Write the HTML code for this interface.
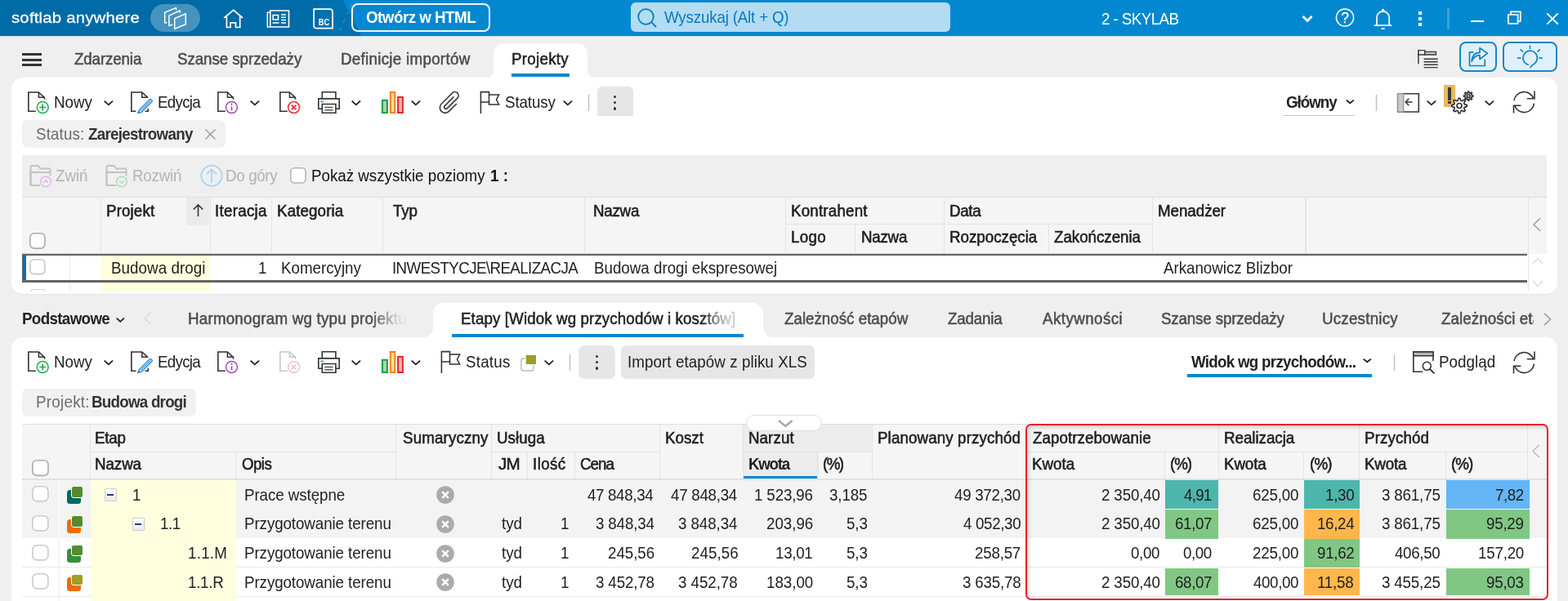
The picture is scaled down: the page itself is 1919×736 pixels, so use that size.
<!DOCTYPE html>
<html lang="pl"><head><meta charset="utf-8"><title>softlab anywhere - Projekty</title><style>
html,body{margin:0;padding:0;}
body{width:1919px;height:736px;overflow:hidden;position:relative;background:#efefef;font-family:"Liberation Sans",sans-serif;}
#r{position:absolute;left:0;top:0;width:1919px;height:736px;overflow:hidden;will-change:transform;}
#r>div,#r>svg,#r>span{position:absolute;box-sizing:border-box;}
.t{white-space:nowrap;line-height:24px;height:24px;transform:scaleY(1.035);}
</style></head><body><div id="r">
<div style="left:0px;top:0px;width:1919px;height:44px;background:#006ba6;"></div>
<div style="left:391px;top:0px;width:60px;height:44px;background:#0072af;"></div>
<div style="left:415px;top:0px;width:1504px;height:44px;background:#0288d1;clip-path:polygon(4.700px 0,100% 0,100% 100%,27.700px 100%);"></div>
<svg style="left:405px;top:0px;" width="40" height="44" viewBox="0 0 40 44" fill="none"><path d="M25 5L8 44" stroke="rgba(255,255,255,0.22)" stroke-width="1.300" stroke-dasharray="3.500 7"/></svg>
<span class="t" style="left:14px;top:10.00px;font-size:18px;font-weight:400;color:#fff;letter-spacing:0.177px;transform-origin:0 18.00px;-webkit-text-stroke:0.25px #fff;transform:scale(1.13,1.035);">softlab anywhere</span>
<div style="left:184px;top:5px;width:61px;height:34px;background:rgba(255,255,255,0.27);border-radius:17px;"></div>
<svg style="left:195px;top:5px;" width="40" height="34" viewBox="0 0 40 34" fill="none"><g stroke="#fff" stroke-width="1.5" stroke-linejoin="round" stroke-linecap="round"><path d="M20.600 6.800L20.300 4.600 6.700 10.300V23.100L8.900 22.800"/><path d="M25.500 10.300L25.200 8 11.900 14.100V26.600L15.700 25.300"/><path d="M18.700 17.650L32.300 11.700V24.700L18.700 30.400z" fill="rgba(255,255,255,0.08)"/></g></svg>
<svg style="left:272px;top:9px;" width="28" height="28" viewBox="0 0 28 28" fill="none"><path d="M2.100 13L13.750 3.400 25 13" stroke="#fff" stroke-width="1.700" stroke-linejoin="miter" stroke-linecap="butt"/><path d="M5.400 11V24.500H10V18.800H16.500V24.500H21.700V11" stroke="#fff" stroke-width="1.700" stroke-linejoin="miter"/></svg>
<svg style="left:325px;top:10px;" width="30" height="25" viewBox="0 0 30 25" fill="none"><g stroke="#fff"><path d="M5.750 3H28.500V23H5.750z" stroke-width="1.600"/><path d="M5.750 5.200H2.300V23H5.750" stroke-width="1.500"/><path d="M9.200 8.500h6.300v5.500H9.200z" stroke-width="1.600"/><path d="M19 8h6M19 11.300h6M19 14.500h6M8.500 18h8M19 18h6" stroke-width="1.500"/></g></svg>
<svg style="left:382px;top:9px;" width="27" height="28" viewBox="0 0 27 28" fill="none"><path d="M2.100 2.200H22A3 3 0 0 1 25 5.200V25.700H5.100A3 3 0 0 1 2.100 22.700z" stroke="#fff" stroke-width="1.700" stroke-linejoin="miter"/><text x="0" y="0" transform="translate(7.800,21.800) scale(0.800,1)" font-family="Liberation Sans,sans-serif" font-size="11.600" font-weight="700" fill="#fff">BC</text></svg>
<div style="left:430px;top:3.7px;width:169.7px;height:35.5px;background:transparent;border:2px solid rgba(255,255,255,0.93);border-radius:8px;"></div>
<span class="t" style="left:448px;top:10.00px;font-size:18.75px;font-weight:700;color:#fff;letter-spacing:-0.496px;transform-origin:0 18.00px;">Otwórz w HTML</span>
<div style="left:772px;top:3px;width:391px;height:36px;background:#b3dcf3;border-radius:6px;"></div>
<svg style="left:778px;top:8px;" width="28" height="28" viewBox="0 0 28 28" fill="none"><circle cx="12.5" cy="12.5" r="9.3" stroke="#0b7cba" stroke-width="1.8"/><path d="M19.2 19.2l5.3 5.3" stroke="#0b7cba" stroke-width="1.9" stroke-linecap="round"/></svg>
<span class="t" style="left:813px;top:10.00px;font-size:18.75px;font-weight:400;color:#0a79b6;letter-spacing:-0.176px;transform-origin:0 18.00px;">Wyszukaj (Alt + Q)</span>
<span class="t" style="left:1348px;top:12.00px;font-size:18.75px;font-weight:400;color:#fff;letter-spacing:-0.556px;transform-origin:0 18.00px;">2 - SKYLAB</span>
<svg style="left:1592px;top:17px;" width="16" height="12" viewBox="0 0 16 12" fill="none"><path d="M2.5 3l5.5 5.5L13.5 3" stroke="#fff" stroke-width="2.8" stroke-linejoin="miter"/></svg>
<svg style="left:1632px;top:8px;" width="28" height="28" viewBox="0 0 28 28" fill="none"><circle cx="14" cy="13.5" r="10.6" stroke="#fff" stroke-width="1.5"/><text x="14" y="19.800" text-anchor="middle" font-family="Liberation Sans,sans-serif" font-size="17.500" fill="#fff" stroke="#fff" stroke-width="0.300">?</text></svg>
<svg style="left:1680px;top:8px;" width="26" height="30" viewBox="0 0 26 30" fill="none"><path d="M2.5 23.2h20M5 23V13.5a7.6 7.6 0 0 1 15.2 0V23" stroke="#fff" stroke-width="1.7" stroke-linecap="round"/><circle cx="12.6" cy="4.3" r="1.6" fill="#fff"/><path d="M10.5 27h4.2" stroke="#fff" stroke-width="1.7"/></svg>
<div style="left:1735.5px;top:13.5px;width:4px;height:4px;background:#fff;"></div>
<div style="left:1735.5px;top:20.5px;width:4px;height:4px;background:#fff;"></div>
<div style="left:1735.5px;top:27.5px;width:4px;height:4px;background:#fff;"></div>
<div style="left:1770.5px;top:8.5px;width:3px;height:27px;background:rgba(255,255,255,0.22);border-radius:1.5px;"></div>
<div style="left:1799.5px;top:25px;width:16px;height:2px;background:#fff;"></div>
<svg style="left:1843px;top:11px;" width="20" height="20" viewBox="0 0 20 20" fill="none"><path d="M6 6.500V3.400h11.800v11.600H14.800" stroke="#fff" stroke-width="1.700"/><path d="M2.900 7h11.700v10.900H2.900z" stroke="#fff" stroke-width="1.700"/></svg>
<svg style="left:1891px;top:14px;" width="18" height="18" viewBox="0 0 18 18" fill="none"><path d="M2.3 2.3l13.4 13.4M15.7 2.3L2.3 15.7" stroke="#fff" stroke-width="1.8"/></svg>
<div style="left:0px;top:44px;width:1919px;height:692px;background:#efefef;"></div>
<div style="left:0px;top:44px;width:1919px;height:1px;background:#c3ddee;"></div>
<div style="left:27px;top:65px;width:24px;height:3px;background:#333;"></div>
<div style="left:27px;top:71.5px;width:24px;height:3px;background:#333;"></div>
<div style="left:27px;top:78px;width:24px;height:3px;background:#333;"></div>
<span class="t" style="left:91px;top:61.00px;font-size:18.75px;font-weight:400;color:#4d4d4d;letter-spacing:-0.131px;transform-origin:0 18.00px;-webkit-text-stroke:0.5px #4d4d4d;">Zdarzenia</span>
<span class="t" style="left:217px;top:61.00px;font-size:18.75px;font-weight:400;color:#4d4d4d;letter-spacing:-0.063px;transform-origin:0 18.00px;-webkit-text-stroke:0.5px #4d4d4d;">Szanse sprzedaży</span>
<span class="t" style="left:417px;top:61.00px;font-size:18.75px;font-weight:400;color:#4d4d4d;letter-spacing:0.294px;transform-origin:0 18.00px;-webkit-text-stroke:0.5px #4d4d4d;">Definicje importów</span>
<div style="left:603.75px;top:52.75px;width:115px;height:50px;background:#fff;border-radius:13px 13px 0 0;"></div>
<svg style="left:595.75px;top:87px;" width="8" height="8" viewBox="0 0 8 8" fill="none"><path d="M8 0V8H0A8 8 0 0 0 8 0z" fill="#fff"/></svg>
<svg style="left:718.75px;top:87px;" width="8" height="8" viewBox="0 0 8 8" fill="none"><path d="M0 0V8H8A8 8 0 0 1 0 0z" fill="#fff"/></svg>
<span class="t" style="left:626px;top:61.00px;font-size:18.75px;font-weight:400;color:#212121;letter-spacing:0.286px;transform-origin:0 18.00px;-webkit-text-stroke:0.5px #212121;">Projekty</span>
<div style="left:625.7px;top:90px;width:71.3px;height:3.6px;background:#0288d1;"></div>
<svg style="left:1734px;top:59px;" width="28" height="27" viewBox="0 0 28 27" fill="none"><g stroke="#3a3a3a"><path d="M1.900 2.600V19.200" stroke-width="1.500"/><path d="M2 2.600H9.800V8H2z" fill="#efefef" stroke-width="1.400"/><path d="M9.800 4.400H23.500V8H9.800z" fill="#c4c4c4" stroke-width="1.300"/><path d="M8.600 13.200H25.700M8.600 16.700H25.700M8.600 20.200H25.700M8.600 23.600H25.700" stroke-width="1.400"/></g></svg>
<div style="left:1786px;top:51.2px;width:45.5px;height:37px;background:#e0f0fa;border:2px solid #1c86c5;border-radius:8px;"></div>
<svg style="left:1794px;top:54px;" width="30" height="30" viewBox="0 0 30 30" fill="none"><g stroke="#1581c0" stroke-width="1.700" stroke-linejoin="miter"><path d="M9.500 10.100H4.500V26.500H23.300V18.500"/><path d="M7.200 21.200C7.500 14.500 11 10.500 17 10.300V4.600L26.300 11.300 17 18.500V13.600C12 13.800 9 16.500 7.200 21.200z" fill="#e0f0fa" stroke-linejoin="round"/></g></svg>
<div style="left:1838.7px;top:51.2px;width:67.5px;height:37px;background:#e0f0fa;border:2px solid #1c86c5;border-radius:8px;"></div>
<svg style="left:1856px;top:54px;" width="34" height="32" viewBox="0 0 34 32" fill="none"><g stroke="#1387cc" stroke-width="1.700" stroke-linecap="round" fill="none"><path d="M14.300 25.300A8.700 8.700 0 1 1 21.500 24.200C19.500 25.300 18 27 17 28.500"/><path d="M16.500 2.400v3M5.100 6.900l2.300 2.100M28.400 6.900l-2.400 2.300M1.500 17.200h3.100M28.200 17.200h3.100"/></g></svg>
<div style="left:14px;top:95px;width:1892px;height:265.8px;background:#fff;border-radius:14px;border-bottom:1px solid #e4e4e4;"></div>
<svg style="left:33.05px;top:111.05px;" width="29" height="29" viewBox="0 0 29 29" fill="none"><path d="M10.800 25.300H1.850V2H14.40L21.50 8.700V10.800" stroke="#333" stroke-width="1.600" stroke-linejoin="miter"/><path d="M14.40 2V8.300H21.50" stroke="#333" stroke-width="1.500"/><circle cx="19.200" cy="20.500" r="6.950" stroke="#1fab4b" stroke-width="1.500"/><path d="M19.200 16.600v7.800M15.300 20.500h7.800" stroke="#1fab4b" stroke-width="1.700"/></svg>
<span class="t" style="left:66px;top:114.00px;font-size:18.75px;font-weight:400;color:#212121;letter-spacing:-0.017px;transform-origin:0 18.00px;">Nowy</span>
<svg style="left:126px;top:121.80000000000001px;" width="13.7" height="8.5" viewBox="0 0 13.7 8.5" fill="none"><path d="M1.650 1.650L6.85 6.30L12.05 1.650" stroke="#1d1d1d" stroke-width="1.8" stroke-linejoin="miter"/></svg>
<svg style="left:159.25px;top:111.05px;" width="30" height="30" viewBox="0 0 30 30" fill="none"><path d="M7.400 25.300H1.850V2H14.700L22 8.700M18.500 25.300H22.300V21.800" stroke="#333" stroke-width="1.600"/><path d="M14.700 2V8.300H21.600" stroke="#333" stroke-width="1.500"/><path d="M11.500 23.500L24 11a1.500 1.500 0 0 1 2.100 0l.7.700a1.500 1.500 0 0 1 0 2.100L14.300 26.300 9.600 27.600z" stroke="#2b8bd6" stroke-width="1.400" fill="#fff" stroke-linejoin="round"/><path d="M12.900 24.900L25.400 12.400" stroke="#2b8bd6" stroke-width="1.100"/><path d="M9.600 27.600l1.200-3.400 2.300 2.300z" fill="#2b8bd6"/></svg>
<span class="t" style="left:193px;top:114.00px;font-size:18.75px;font-weight:400;color:#212121;letter-spacing:-0.706px;transform-origin:0 18.00px;">Edycja</span>
<svg style="left:265.1px;top:111.05px;" width="29" height="29" viewBox="0 0 29 29" fill="none"><path d="M10.800 25.300H1.850V2H13.40L20.50 8.700V10.800" stroke="#333" stroke-width="1.600" stroke-linejoin="miter"/><path d="M13.40 2V8.300H20.50" stroke="#333" stroke-width="1.500"/><circle cx="18.500" cy="20.500" r="6.950" stroke="#a349b8" stroke-width="1.500"/><path d="M18.500 19.300v5" stroke="#a349b8" stroke-width="1.700"/><circle cx="18.500" cy="16.700" r="1.100" fill="#a349b8"/></svg>
<svg style="left:305.3px;top:121.80000000000001px;" width="13.7" height="8.5" viewBox="0 0 13.7 8.5" fill="none"><path d="M1.650 1.650L6.85 6.30L12.05 1.650" stroke="#1d1d1d" stroke-width="1.8" stroke-linejoin="miter"/></svg>
<svg style="left:341px;top:111.05px;" width="29" height="29" viewBox="0 0 29 29" fill="none"><g opacity="1"><path d="M10.800 25.300H1.850V2H13.40L20.50 8.700V10.800" stroke="#333" stroke-width="1.600" stroke-linejoin="miter"/><path d="M13.40 2V8.300H20.50" stroke="#333" stroke-width="1.500"/><circle cx="18.600" cy="20.500" r="6.950" stroke="#e8313a" stroke-width="1.600"/><path d="M15.800 17.700l5.600 5.600M21.400 17.700l-5.600 5.600" stroke="#e8313a" stroke-width="1.800"/></g></svg>
<svg style="left:388px;top:111.25px;" width="29" height="29" viewBox="0 0 29 29" fill="none"><g stroke="#333" stroke-width="1.600" stroke-linejoin="miter"><path d="M6.300 9.900V1.800H22.900V9.900"/><path d="M6.300 22.300H1.800V9.900H27.200V22.300H22.900"/><path d="M6.300 16.500H22.900V27.200H6.300z" fill="#fff"/></g><path d="M9.300 20.500H19.600M9.300 23.700H19.600" stroke="#555" stroke-width="1.500"/><path d="M4.300 13.400h3.600" stroke="#2b8bd6" stroke-width="1.600"/></svg>
<svg style="left:429.3px;top:121.80000000000001px;" width="13.7" height="8.5" viewBox="0 0 13.7 8.5" fill="none"><path d="M1.650 1.650L6.85 6.30L12.05 1.650" stroke="#1d1d1d" stroke-width="1.8" stroke-linejoin="miter"/></svg>
<svg style="left:466px;top:111px;" width="29" height="29" viewBox="0 0 29 29" fill="none"><path d="M1.900 11.800H7.900V26.900H1.900z" fill="#a9d7b0" stroke="#12a14b" stroke-width="2"/><path d="M11.800 2H17.300V26.900H11.800z" fill="#fbe08f" stroke="#f08223" stroke-width="2"/><path d="M21.100 7.900H26.900V26.900H21.100z" fill="#f4b6b8" stroke="#e8262c" stroke-width="2"/></svg>
<svg style="left:502px;top:121.80000000000001px;" width="13.7" height="8.5" viewBox="0 0 13.7 8.5" fill="none"><path d="M1.650 1.650L6.85 6.30L12.05 1.650" stroke="#1d1d1d" stroke-width="1.8" stroke-linejoin="miter"/></svg>
<svg style="left:530px;top:106px;" width="40" height="40" viewBox="0 0 40 40" fill="none"><g transform="translate(14.850,25.850) rotate(-45)"><path d="M12.600 6.500H0A6.500 6.500 0 0 1 0 -6.500H18.900A4.400 4.400 0 0 1 18.900 2.300H1.200A2.150 2.150 0 0 1 1.200 -2H16.300" stroke="#3a3a3a" stroke-width="1.650" stroke-linecap="round"/></g></svg>
<svg style="left:585.5px;top:111.0px;" width="27" height="29" viewBox="0 0 27 29" fill="none"><path d="M2.400 28V1.600H12.500V5H24.600L21.500 11 24.600 17H12.500V14H2.400" stroke="#333" stroke-width="1.550" stroke-linejoin="miter"/><path d="M12.500 5V14" stroke="#333" stroke-width="1.550"/></svg>
<span class="t" style="left:618px;top:114.00px;font-size:18.75px;font-weight:400;color:#212121;letter-spacing:-0.105px;transform-origin:0 18.00px;">Statusy</span>
<svg style="left:688px;top:121.80000000000001px;" width="13.7" height="8.5" viewBox="0 0 13.7 8.5" fill="none"><path d="M1.650 1.650L6.85 6.30L12.05 1.650" stroke="#1d1d1d" stroke-width="1.8" stroke-linejoin="miter"/></svg>
<svg style="left:717.7px;top:116px;" width="5" height="21" viewBox="0 0 5 21" fill="none"><path d="M2.500 0V20" stroke="#c0c0c0" stroke-width="1.500"/></svg>
<div style="left:731px;top:105.5px;width:44px;height:36.5px;background:#e6e6e6;border-radius:6px 6px 0 0;"></div>
<div style="left:750.8px;top:116.8px;width:3.4px;height:3.4px;background:#333;border-radius:50%;"></div>
<div style="left:750.8px;top:124.1px;width:3.4px;height:3.4px;background:#333;border-radius:50%;"></div>
<div style="left:750.8px;top:131.3px;width:3.4px;height:3.4px;background:#333;border-radius:50%;"></div>
<span class="t" style="left:1574px;top:114.00px;font-size:18.75px;font-weight:700;color:#222;letter-spacing:-1.010px;transform-origin:0 18.00px;">Główny</span>
<svg style="left:1645.6px;top:120.9px;" width="12.5" height="7.5" viewBox="0 0 12.5 7.5" fill="none"><path d="M1.650 1.650L6.25 5.30L10.85 1.650" stroke="#1d1d1d" stroke-width="1.8" stroke-linejoin="miter"/></svg>
<div style="left:1570px;top:141px;width:88px;height:1px;background:#9fd3f0;"></div>
<svg style="left:1681.7px;top:116px;" width="5" height="21" viewBox="0 0 5 21" fill="none"><path d="M2.500 0V20" stroke="#c0c0c0" stroke-width="1.500"/></svg>
<svg style="left:1709px;top:113px;" width="30" height="26" viewBox="0 0 30 26" fill="none"><path d="M1.700 1.800H27.300V24H1.700z" stroke="#3b3735" stroke-width="1.600"/><path d="M1.500 1.600H8.700V24.200H1.500z" fill="#c9c9c9" stroke="#8e8e8e" stroke-width="1.200"/><path d="M19.700 12H11.500M15.300 7.800L11.200 12l4.100 4.200" stroke="#3b3735" stroke-width="1.600"/></svg>
<svg style="left:1745px;top:121.9px;" width="13.7" height="8.5" viewBox="0 0 13.7 8.5" fill="none"><path d="M1.650 1.650L6.85 6.30L12.05 1.650" stroke="#1d1d1d" stroke-width="1.8" stroke-linejoin="miter"/></svg>
<div style="left:1767.1px;top:104.2px;width:13.9px;height:26.7px;background:#e6ba5a;"></div>
<div style="left:1772px;top:107.4px;width:4.2px;height:15.9px;background:#3a3a3a;"></div>
<div style="left:1772px;top:124.3px;width:4.2px;height:3.2px;background:#3a3a3a;"></div>
<svg style="left:1774px;top:108px;" width="32" height="32" viewBox="0 0 32 32" fill="none"><path d="M21.26 20.59 L21.26 22.41 L18.22 23.39 L17.73 24.56 L19.19 27.40 L17.90 28.69 L15.06 27.23 L13.89 27.72 L12.91 30.76 L11.09 30.76 L10.11 27.72 L8.94 27.23 L6.10 28.69 L4.81 27.40 L6.27 24.56 L5.78 23.39 L2.74 22.41 L2.74 20.59 L5.78 19.61 L6.27 18.44 L4.81 15.60 L6.10 14.31 L8.94 15.77 L10.11 15.28 L11.09 12.24 L12.91 12.24 L13.89 15.28 L15.06 15.77 L17.90 14.31 L19.19 15.60 L17.73 18.44 L18.22 19.61Z" stroke="#333" stroke-width="1.7" stroke-linejoin="round" fill="#fff"/><circle cx="12" cy="21.5" r="3" stroke="#333" stroke-width="1.7" fill="#fff"/><path d="M28.87 9.04 L28.87 10.16 L26.74 10.67 L26.46 11.34 L27.61 13.22 L26.82 14.01 L24.94 12.86 L24.27 13.14 L23.76 15.27 L22.64 15.27 L22.13 13.14 L21.46 12.86 L19.58 14.01 L18.79 13.22 L19.94 11.34 L19.66 10.67 L17.53 10.16 L17.53 9.04 L19.66 8.53 L19.94 7.86 L18.79 5.98 L19.58 5.19 L21.46 6.34 L22.13 6.06 L22.64 3.93 L23.76 3.93 L24.27 6.06 L24.94 6.34 L26.82 5.19 L27.61 5.98 L26.46 7.86 L26.74 8.53Z" stroke="#333" stroke-width="1.6" stroke-linejoin="round" fill="#fff"/><circle cx="23.2" cy="9.6" r="1.8" stroke="#333" stroke-width="1.6" fill="#fff"/></svg>
<svg style="left:1816px;top:121.9px;" width="13.7" height="8.5" viewBox="0 0 13.7 8.5" fill="none"><path d="M1.650 1.650L6.85 6.30L12.05 1.650" stroke="#1d1d1d" stroke-width="1.8" stroke-linejoin="miter"/></svg>
<svg style="left:1850.9px;top:111.3px;" width="29" height="29" viewBox="0 0 29 29" fill="none"><g stroke="#333" stroke-width="1.600" stroke-linejoin="miter"><path d="M2 12.200A12.300 12.300 0 0 1 25.800 9.800"/><path d="M27 0.500V9.800H17.800"/><path d="M26.500 15.600A12.300 12.300 0 0 1 2.600 18.200"/><path d="M1.500 27.500V18.200H10.400"/></g></svg>
<div style="left:27px;top:147px;width:248.5px;height:34px;background:#f1f1f1;border-radius:7px;"></div>
<span class="t" style="left:44px;top:153.00px;font-size:18.75px;font-weight:400;color:#6b6b6b;letter-spacing:0.132px;transform-origin:0 18.00px;">Status:</span>
<span class="t" style="left:108px;top:153.00px;font-size:18.75px;font-weight:700;color:#333;letter-spacing:-0.708px;transform-origin:0 18.00px;">Zarejestrowany</span>
<svg style="left:250px;top:157px;" width="15" height="15" viewBox="0 0 15 15" fill="none"><path d="M1.500 1.500l12 12M13.500 1.500l-12 12" stroke="#9a9a9a" stroke-width="1.400"/></svg>
<div style="left:27px;top:190px;width:1866px;height:52px;background:#efefef;"></div>
<svg style="left:35.5px;top:200.5px;" width="30" height="30" viewBox="0 0 30 30" fill="none"><path d="M1.500 26V3.500a1.500 1.500 0 0 1 1.500-1.500H10.500L13.500 5.500H24a1.500 1.500 0 0 1 1.500 1.500V10" stroke="#c2c2c2" stroke-width="1.900"/><path d="M1.500 26V10H25.500V14.500M1.500 26H13" stroke="#c2c2c2" stroke-width="1.900"/><circle cx="20" cy="21.500" r="6.300" stroke="#e2b6e4" stroke-width="1.500" fill="#efefef"/><path d="M-3 1.300L0-1.700 3 1.300" transform="translate(20,21.500)" stroke="#e2b6e4" stroke-width="1.500"/></svg>
<span class="t" style="left:68px;top:204.00px;font-size:18.75px;font-weight:400;color:#b3b3b3;letter-spacing:-0.017px;transform-origin:0 18.00px;">Zwiń</span>
<svg style="left:129px;top:200.5px;" width="30" height="30" viewBox="0 0 30 30" fill="none"><path d="M1.500 26V3.500a1.500 1.500 0 0 1 1.500-1.500H10.500L13.500 5.500H24a1.500 1.500 0 0 1 1.500 1.500V10" stroke="#c2c2c2" stroke-width="1.900"/><path d="M1.500 26V10H25.500V14.500M1.500 26H13" stroke="#c2c2c2" stroke-width="1.900"/><circle cx="20" cy="21.500" r="6.300" stroke="#a9dfb9" stroke-width="1.500" fill="#efefef"/><path d="M-3-1.300L0 1.700 3-1.300" transform="translate(20,21.500)" stroke="#a9dfb9" stroke-width="1.500"/></svg>
<span class="t" style="left:162px;top:204.00px;font-size:18.75px;font-weight:400;color:#b3b3b3;letter-spacing:-0.190px;transform-origin:0 18.00px;">Rozwiń</span>
<svg style="left:243.7px;top:199.5px;" width="30" height="30" viewBox="0 0 30 30" fill="none"><circle cx="15" cy="15.200" r="12.600" stroke="#a9d3ee" stroke-width="1.700"/><path d="M15 23.500V8M9 13.500l6-6 6 6" stroke="#a9d3ee" stroke-width="1.700"/></svg>
<span class="t" style="left:276px;top:204.00px;font-size:18.75px;font-weight:400;color:#b3b3b3;letter-spacing:-0.333px;transform-origin:0 18.00px;">Do góry</span>
<svg style="left:354px;top:204.3px;" width="21.8" height="21.8" viewBox="0 0 21.8 21.8" fill="none"><rect x="1.80" y="1.80" width="18.20" height="18.20" rx="4.5" fill="#fff" stroke="#b5b5b5" stroke-width="1.6"/></svg>
<span class="t" style="left:381px;top:204.00px;font-size:18.75px;font-weight:400;color:#111;letter-spacing:0.000px;transform-origin:0 18.00px;">Pokaż wszystkie poziomy</span>
<span class="t" style="left:600px;top:204.00px;font-size:18.75px;font-weight:700;color:#111;letter-spacing:0.025px;transform-origin:0 18.00px;">1 :</span>
<div style="left:27px;top:241px;width:1866px;height:69.5px;background:#f5f5f5;border-top:1px solid #e0e0e0;"></div>
<div style="left:228px;top:242px;width:28.3px;height:33.5px;background:#ebebeb;"></div>
<svg style="left:234.5px;top:249px;" width="15" height="17" viewBox="0 0 15 17" fill="none"><path d="M7.500 16V2M1.800 7.500L7.500 1.800 13.200 7.500" stroke="#333" stroke-width="1.600"/></svg>
<div style="left:123px;top:242px;width:1.2px;height:68.5px;background:#e4e4e4;"></div>
<div style="left:256.5px;top:242px;width:1.2px;height:68.5px;background:#e4e4e4;"></div>
<div style="left:332px;top:242px;width:1.2px;height:68.5px;background:#e4e4e4;"></div>
<div style="left:467.7px;top:242px;width:1.2px;height:68.5px;background:#e4e4e4;"></div>
<div style="left:715px;top:242px;width:1.2px;height:68.5px;background:#e4e4e4;"></div>
<div style="left:961px;top:242px;width:1.2px;height:68.5px;background:#e4e4e4;"></div>
<div style="left:1155px;top:242px;width:1.2px;height:68.5px;background:#e4e4e4;"></div>
<div style="left:1410px;top:242px;width:1.2px;height:68.5px;background:#e4e4e4;"></div>
<div style="left:1597.4px;top:242px;width:1.2px;height:68.5px;background:#e4e4e4;"></div>
<div style="left:1869.8px;top:242px;width:1.2px;height:68.5px;background:#e4e4e4;"></div>
<div style="left:961px;top:274.3px;width:194px;height:1.2px;background:#e4e4e4;"></div>
<div style="left:1155px;top:274.3px;width:255px;height:1.2px;background:#e4e4e4;"></div>
<div style="left:1046px;top:275px;width:1.2px;height:35.5px;background:#e4e4e4;"></div>
<div style="left:1283px;top:275px;width:1.2px;height:35.5px;background:#e4e4e4;"></div>
<span class="t" style="left:130px;top:247.00px;font-size:18.75px;font-weight:400;color:#1f1f1f;letter-spacing:0.132px;transform-origin:0 18.00px;-webkit-text-stroke:0.55px #1f1f1f;">Projekt</span>
<span class="t" style="left:263px;top:247.00px;font-size:18.75px;font-weight:400;color:#1f1f1f;letter-spacing:0.279px;transform-origin:0 18.00px;-webkit-text-stroke:0.55px #1f1f1f;">Iteracja</span>
<span class="t" style="left:339px;top:247.00px;font-size:18.75px;font-weight:400;color:#1f1f1f;letter-spacing:0.125px;transform-origin:0 18.00px;-webkit-text-stroke:0.55px #1f1f1f;">Kategoria</span>
<span class="t" style="left:481px;top:247.00px;font-size:18.75px;font-weight:400;color:#1f1f1f;letter-spacing:-0.105px;transform-origin:0 18.00px;-webkit-text-stroke:0.55px #1f1f1f;">Typ</span>
<span class="t" style="left:726px;top:247.00px;font-size:18.75px;font-weight:400;color:#1f1f1f;letter-spacing:-0.250px;transform-origin:0 18.00px;-webkit-text-stroke:0.55px #1f1f1f;">Nazwa</span>
<span class="t" style="left:968px;top:247.00px;font-size:18.75px;font-weight:400;color:#1f1f1f;letter-spacing:0.199px;transform-origin:0 18.00px;-webkit-text-stroke:0.55px #1f1f1f;">Kontrahent</span>
<span class="t" style="left:1162px;top:247.00px;font-size:18.75px;font-weight:400;color:#1f1f1f;letter-spacing:-0.333px;transform-origin:0 18.00px;-webkit-text-stroke:0.55px #1f1f1f;">Data</span>
<span class="t" style="left:968px;top:279.00px;font-size:18.75px;font-weight:400;color:#1f1f1f;letter-spacing:0.333px;transform-origin:0 18.00px;-webkit-text-stroke:0.55px #1f1f1f;">Logo</span>
<span class="t" style="left:1054px;top:279.00px;font-size:18.75px;font-weight:400;color:#1f1f1f;letter-spacing:-0.250px;transform-origin:0 18.00px;-webkit-text-stroke:0.55px #1f1f1f;">Nazwa</span>
<span class="t" style="left:1162px;top:279.00px;font-size:18.75px;font-weight:400;color:#1f1f1f;letter-spacing:-0.005px;transform-origin:0 18.00px;-webkit-text-stroke:0.55px #1f1f1f;">Rozpoczęcia</span>
<span class="t" style="left:1290px;top:279.00px;font-size:18.75px;font-weight:400;color:#1f1f1f;letter-spacing:-0.026px;transform-origin:0 18.00px;-webkit-text-stroke:0.55px #1f1f1f;">Zakończenia</span>
<span class="t" style="left:1417px;top:247.00px;font-size:18.75px;font-weight:400;color:#1f1f1f;letter-spacing:-0.037px;transform-origin:0 18.00px;-webkit-text-stroke:0.55px #1f1f1f;">Menadżer</span>
<svg style="left:35.2px;top:284px;" width="21.8" height="21.9" viewBox="0 0 21.8 21.9" fill="none"><rect x="1.80" y="1.80" width="18.20" height="18.30" rx="5" fill="#fff" stroke="#ababab" stroke-width="1.6"/></svg>
<svg style="left:1874px;top:265px;" width="14" height="20" viewBox="0 0 14 20" fill="none"><path d="M11 2.200L3 10l8 7.800" stroke="#9e9e9e" stroke-width="1.500"/></svg>
<div style="left:27px;top:310.5px;width:1843px;height:46.5px;background:#fff;"></div>
<div style="left:124px;top:313px;width:132.5px;height:44px;background:#ffffdd;"></div>
<div style="left:85px;top:313px;width:1.2px;height:44px;background:#ececec;"></div>
<div style="left:1869.5px;top:310.5px;width:1.2px;height:46.5px;background:#e4e4e4;"></div>
<div style="left:27px;top:310px;width:1843px;height:1px;background:#d4d4d4;"></div>
<div style="left:27px;top:311px;width:1842px;height:35px;background:transparent;border-top:2px solid #646464;border-bottom:3px solid #646464;border-left:1px solid #646464;"></div>
<div style="left:28px;top:313px;width:4px;height:30px;background:#0b70b3;"></div>
<svg style="left:35.2px;top:316.3px;" width="21.8" height="21.4" viewBox="0 0 21.8 21.4" fill="none"><rect x="1.80" y="1.80" width="18.20" height="17.80" rx="5" fill="#fff" stroke="#c6c6c6" stroke-width="1.6"/></svg>
<span class="t" style="left:136px;top:317.00px;font-size:18.75px;font-weight:400;color:#212121;letter-spacing:0.067px;transform-origin:0 18.00px;">Budowa drogi</span>
<span class="t" style="left:316px;top:317.00px;font-size:18.75px;font-weight:400;color:#212121;letter-spacing:0.000px;transform-origin:0 18.00px;">1</span>
<span class="t" style="left:344px;top:317.00px;font-size:18.75px;font-weight:400;color:#212121;letter-spacing:-0.006px;transform-origin:0 18.00px;">Komercyjny</span>
<span class="t" style="left:480px;top:317.00px;font-size:18.75px;font-weight:400;color:#212121;letter-spacing:-0.597px;transform-origin:0 18.00px;">INWESTYCJE\REALIZACJA</span>
<span class="t" style="left:727px;top:317.00px;font-size:18.75px;font-weight:400;color:#212121;letter-spacing:0.000px;transform-origin:0 18.00px;">Budowa drogi ekspresowej</span>
<span class="t" style="left:1424px;top:317.00px;font-size:18.75px;font-weight:400;color:#212121;letter-spacing:-0.022px;transform-origin:0 18.00px;">Arkanowicz Blizbor</span>
<div style="left:36.5px;top:353.5px;width:19px;height:6px;background:#fff;border:1.500px solid #cfcfcf;border-bottom:none;border-radius:4px 4px 0 0;"></div>
<div style="left:27px;top:357px;width:1866px;height:3px;background:#fff;"></div>
<svg style="left:1874px;top:314px;" width="16" height="11" viewBox="0 0 16 11" fill="none"><path d="M2 9l6-6.500L14 9" stroke="#dcdcdc" stroke-width="1.500"/></svg>
<svg style="left:1874px;top:342px;" width="16" height="11" viewBox="0 0 16 11" fill="none"><path d="M2 2l6 6.500L14 2" stroke="#dcdcdc" stroke-width="1.500"/></svg>
<span class="t" style="left:27px;top:379.00px;font-size:18.75px;font-weight:700;color:#222;letter-spacing:-0.643px;transform-origin:0 18.00px;">Podstawowe</span>
<svg style="left:140.5px;top:387.7px;" width="12.5" height="8" viewBox="0 0 12.5 8" fill="none"><path d="M1.650 1.650L6.25 5.80L10.85 1.650" stroke="#1d1d1d" stroke-width="1.8" stroke-linejoin="miter"/></svg>
<svg style="left:174px;top:381px;" width="14" height="18" viewBox="0 0 14 18" fill="none"><path d="M10.500 1.800L3 9l7.500 7.200" stroke="#dcdcdc" stroke-width="1.600"/></svg>
<span class="t" style="left:230px;top:379.00px;font-size:18.75px;font-weight:400;color:#4d4d4d;letter-spacing:0.222px;transform-origin:0 18.00px;-webkit-text-stroke:0.5px #4d4d4d;">Harmonogram wg typu projektu</span>
<div style="left:455px;top:372px;width:45px;height:40px;background:linear-gradient(90deg,rgba(239,239,239,0) 0,rgba(239,239,239,0.85) 70%,#efefef 100%);"></div>
<div style="left:530px;top:370.75px;width:404px;height:45px;background:#fff;border-radius:13px 13px 0 0;"></div>
<svg style="left:518px;top:401px;" width="12" height="12" viewBox="0 0 12 12" fill="none"><path d="M12 0V12H0A12 12 0 0 0 12 0z" fill="#fff"/></svg>
<svg style="left:934px;top:401px;" width="12" height="12" viewBox="0 0 12 12" fill="none"><path d="M0 0V12H12A12 12 0 0 1 0 0z" fill="#fff"/></svg>
<span class="t" style="left:564px;top:379.00px;font-size:18.75px;font-weight:400;color:#222;letter-spacing:0.104px;transform-origin:0 18.00px;-webkit-text-stroke:0.5px #222;">Etapy [Widok wg przychodów i kosztów]</span>
<div style="left:858px;top:375px;width:52px;height:32px;background:linear-gradient(90deg,rgba(255,255,255,0) 0,rgba(255,255,255,0.75) 60%,rgba(255,255,255,0.80) 100%);"></div>
<div style="left:553px;top:409px;width:356.5px;height:3.7px;background:#0288d1;"></div>
<span class="t" style="left:960px;top:379.00px;font-size:18.75px;font-weight:400;color:#4d4d4d;letter-spacing:0.003px;transform-origin:0 18.00px;-webkit-text-stroke:0.5px #4d4d4d;">Zależność etapów</span>
<span class="t" style="left:1160px;top:379.00px;font-size:18.75px;font-weight:400;color:#4d4d4d;letter-spacing:-0.167px;transform-origin:0 18.00px;-webkit-text-stroke:0.5px #4d4d4d;">Zadania</span>
<span class="t" style="left:1276px;top:379.00px;font-size:18.75px;font-weight:400;color:#4d4d4d;letter-spacing:0.444px;transform-origin:0 18.00px;-webkit-text-stroke:0.5px #4d4d4d;">Aktywności</span>
<span class="t" style="left:1421px;top:379.00px;font-size:18.75px;font-weight:400;color:#4d4d4d;letter-spacing:-0.155px;transform-origin:0 18.00px;-webkit-text-stroke:0.5px #4d4d4d;">Szanse sprzedaży</span>
<span class="t" style="left:1618px;top:379.00px;font-size:18.75px;font-weight:400;color:#4d4d4d;letter-spacing:0.222px;transform-origin:0 18.00px;-webkit-text-stroke:0.5px #4d4d4d;">Uczestnicy</span>
<span class="t" style="left:1764px;top:379.00px;font-size:18.75px;font-weight:400;color:#4d4d4d;letter-spacing:0.093px;transform-origin:0 18.00px;-webkit-text-stroke:0.5px #4d4d4d;">Zależności eta</span>
<div style="left:1877px;top:372px;width:15px;height:40px;background:#efefef;"></div>
<svg style="left:1887px;top:382px;" width="14" height="18" viewBox="0 0 14 18" fill="none"><path d="M3 1.800L10.500 9 3 16.200" stroke="#9e9e9e" stroke-width="1.600"/></svg>
<div style="left:14px;top:413px;width:1892px;height:340px;background:#fff;border-radius:14px;"></div>
<svg style="left:33.05px;top:429.05px;" width="29" height="29" viewBox="0 0 29 29" fill="none"><path d="M10.800 25.300H1.850V2H14.40L21.50 8.700V10.800" stroke="#333" stroke-width="1.600" stroke-linejoin="miter"/><path d="M14.40 2V8.300H21.50" stroke="#333" stroke-width="1.500"/><circle cx="19.200" cy="20.500" r="6.950" stroke="#1fab4b" stroke-width="1.500"/><path d="M19.200 16.600v7.800M15.300 20.500h7.800" stroke="#1fab4b" stroke-width="1.700"/></svg>
<span class="t" style="left:66px;top:432.00px;font-size:18.75px;font-weight:400;color:#212121;letter-spacing:-0.017px;transform-origin:0 18.00px;">Nowy</span>
<svg style="left:126px;top:439.79999999999995px;" width="13.7" height="8.5" viewBox="0 0 13.7 8.5" fill="none"><path d="M1.650 1.650L6.85 6.30L12.05 1.650" stroke="#1d1d1d" stroke-width="1.8" stroke-linejoin="miter"/></svg>
<svg style="left:159.25px;top:429.05px;" width="30" height="30" viewBox="0 0 30 30" fill="none"><path d="M7.400 25.300H1.850V2H14.700L22 8.700M18.500 25.300H22.300V21.800" stroke="#333" stroke-width="1.600"/><path d="M14.700 2V8.300H21.600" stroke="#333" stroke-width="1.500"/><path d="M11.500 23.500L24 11a1.500 1.500 0 0 1 2.100 0l.7.700a1.500 1.500 0 0 1 0 2.100L14.300 26.300 9.600 27.600z" stroke="#2b8bd6" stroke-width="1.400" fill="#fff" stroke-linejoin="round"/><path d="M12.900 24.900L25.400 12.400" stroke="#2b8bd6" stroke-width="1.100"/><path d="M9.600 27.600l1.200-3.400 2.300 2.300z" fill="#2b8bd6"/></svg>
<span class="t" style="left:193px;top:432.00px;font-size:18.75px;font-weight:400;color:#212121;letter-spacing:-0.706px;transform-origin:0 18.00px;">Edycja</span>
<svg style="left:265.1px;top:429.05px;" width="29" height="29" viewBox="0 0 29 29" fill="none"><path d="M10.800 25.300H1.850V2H13.40L20.50 8.700V10.800" stroke="#333" stroke-width="1.600" stroke-linejoin="miter"/><path d="M13.40 2V8.300H20.50" stroke="#333" stroke-width="1.500"/><circle cx="18.500" cy="20.500" r="6.950" stroke="#a349b8" stroke-width="1.500"/><path d="M18.500 19.300v5" stroke="#a349b8" stroke-width="1.700"/><circle cx="18.500" cy="16.700" r="1.100" fill="#a349b8"/></svg>
<svg style="left:305.3px;top:439.79999999999995px;" width="13.7" height="8.5" viewBox="0 0 13.7 8.5" fill="none"><path d="M1.650 1.650L6.85 6.30L12.05 1.650" stroke="#1d1d1d" stroke-width="1.8" stroke-linejoin="miter"/></svg>
<svg style="left:341px;top:429.05px;" width="29" height="29" viewBox="0 0 29 29" fill="none"><g opacity="0.28"><path d="M10.800 25.300H1.850V2H13.40L20.50 8.700V10.800" stroke="#333" stroke-width="1.600" stroke-linejoin="miter"/><path d="M13.40 2V8.300H20.50" stroke="#333" stroke-width="1.500"/><circle cx="18.600" cy="20.500" r="6.950" stroke="#e8313a" stroke-width="1.600"/><path d="M15.800 17.700l5.600 5.600M21.400 17.700l-5.600 5.600" stroke="#e8313a" stroke-width="1.800"/></g></svg>
<svg style="left:388px;top:429.25px;" width="29" height="29" viewBox="0 0 29 29" fill="none"><g stroke="#333" stroke-width="1.600" stroke-linejoin="miter"><path d="M6.300 9.900V1.800H22.900V9.900"/><path d="M6.300 22.300H1.800V9.900H27.200V22.300H22.900"/><path d="M6.300 16.500H22.900V27.200H6.300z" fill="#fff"/></g><path d="M9.300 20.500H19.600M9.300 23.700H19.600" stroke="#555" stroke-width="1.500"/><path d="M4.300 13.400h3.600" stroke="#2b8bd6" stroke-width="1.600"/></svg>
<svg style="left:429.3px;top:439.79999999999995px;" width="13.7" height="8.5" viewBox="0 0 13.7 8.5" fill="none"><path d="M1.650 1.650L6.85 6.30L12.05 1.650" stroke="#1d1d1d" stroke-width="1.8" stroke-linejoin="miter"/></svg>
<svg style="left:466px;top:429px;" width="29" height="29" viewBox="0 0 29 29" fill="none"><path d="M1.900 11.800H7.900V26.900H1.900z" fill="#a9d7b0" stroke="#12a14b" stroke-width="2"/><path d="M11.800 2H17.300V26.900H11.800z" fill="#fbe08f" stroke="#f08223" stroke-width="2"/><path d="M21.100 7.900H26.900V26.900H21.100z" fill="#f4b6b8" stroke="#e8262c" stroke-width="2"/></svg>
<svg style="left:502px;top:439.79999999999995px;" width="13.7" height="8.5" viewBox="0 0 13.7 8.5" fill="none"><path d="M1.650 1.650L6.85 6.30L12.05 1.650" stroke="#1d1d1d" stroke-width="1.8" stroke-linejoin="miter"/></svg>
<svg style="left:538.3px;top:429.0px;" width="27" height="29" viewBox="0 0 27 29" fill="none"><path d="M2.400 28V1.600H12.500V5H24.600L21.500 11 24.600 17H12.500V14H2.400" stroke="#333" stroke-width="1.550" stroke-linejoin="miter"/><path d="M12.500 5V14" stroke="#333" stroke-width="1.550"/></svg>
<span class="t" style="left:570px;top:432.00px;font-size:18.75px;font-weight:400;color:#212121;letter-spacing:0.222px;transform-origin:0 18.00px;">Status</span>
<svg style="left:636px;top:433px;" width="22" height="23" viewBox="0 0 22 23" fill="none"><rect x="1.900" y="6" width="15.100" height="15" rx="3" fill="#fff" stroke="#bdbdb8" stroke-width="1.500"/><rect x="7.200" y="1.300" width="13.300" height="12.300" rx="1.500" fill="#9e9d24" stroke="#fff" stroke-width="1"/></svg>
<svg style="left:665.4px;top:439.9px;" width="13.7" height="8.5" viewBox="0 0 13.7 8.5" fill="none"><path d="M1.650 1.650L6.85 6.30L12.05 1.650" stroke="#1d1d1d" stroke-width="1.8" stroke-linejoin="miter"/></svg>
<svg style="left:695.2px;top:433.5px;" width="5" height="21" viewBox="0 0 5 21" fill="none"><path d="M2.500 0V20" stroke="#c0c0c0" stroke-width="1.500"/></svg>
<div style="left:708.4px;top:423px;width:44.4px;height:41px;background:#e6e6e6;border-radius:7px;"></div>
<div style="left:728.8px;top:434.8px;width:3.4px;height:3.4px;background:#333;border-radius:50%;"></div>
<div style="left:728.8px;top:442.1px;width:3.4px;height:3.4px;background:#333;border-radius:50%;"></div>
<div style="left:728.8px;top:449.3px;width:3.4px;height:3.4px;background:#333;border-radius:50%;"></div>
<div style="left:759.5px;top:423px;width:237.5px;height:41px;background:#e6e6e6;border-radius:7px;"></div>
<span class="t" style="left:768px;top:432.00px;font-size:18.75px;font-weight:400;color:#212121;letter-spacing:0.081px;transform-origin:0 18.00px;">Import etapów z pliku XLS</span>
<span class="t" style="left:1458px;top:432.00px;font-size:18.75px;font-weight:700;color:#222;letter-spacing:-0.714px;transform-origin:0 18.00px;">Widok wg przychodów...</span>
<svg style="left:1667.3px;top:438.4px;" width="12.5" height="7.5" viewBox="0 0 12.5 7.5" fill="none"><path d="M1.650 1.650L6.25 5.30L10.85 1.650" stroke="#1d1d1d" stroke-width="1.8" stroke-linejoin="miter"/></svg>
<div style="left:1452.7px;top:458.3px;width:226.5px;height:3.7px;background:#0288d1;"></div>
<svg style="left:1703.7px;top:433.5px;" width="5" height="21" viewBox="0 0 5 21" fill="none"><path d="M2.500 0V20" stroke="#c0c0c0" stroke-width="1.500"/></svg>
<svg style="left:1727.5px;top:428.5px;" width="30" height="30" viewBox="0 0 30 30" fill="none"><path d="M13 26.300H1.800V2H26V13" stroke="#333" stroke-width="1.600"/><path d="M1.800 2H26V6.800H1.800z" fill="#b5b5b5" stroke="#333" stroke-width="1.400"/><circle cx="18.300" cy="19.300" r="5" stroke="#333" stroke-width="1.600" fill="#fff"/><path d="M22 23l5.500 5.300" stroke="#333" stroke-width="1.800"/></svg>
<span class="t" style="left:1761px;top:432.00px;font-size:18.75px;font-weight:400;color:#212121;letter-spacing:0.062px;transform-origin:0 18.00px;">Podgląd</span>
<svg style="left:1850.9px;top:429.6px;" width="29" height="29" viewBox="0 0 29 29" fill="none"><g stroke="#333" stroke-width="1.600" stroke-linejoin="miter"><path d="M2 12.200A12.300 12.300 0 0 1 25.800 9.800"/><path d="M27 0.500V9.800H17.800"/><path d="M26.500 15.600A12.300 12.300 0 0 1 2.600 18.200"/><path d="M1.500 27.500V18.200H10.400"/></g></svg>
<div style="left:27px;top:476px;width:213px;height:33.7px;background:#f1f1f1;border-radius:7px;"></div>
<span class="t" style="left:44px;top:481.00px;font-size:18.75px;font-weight:400;color:#6b6b6b;letter-spacing:0.279px;transform-origin:0 18.00px;">Projekt:</span>
<span class="t" style="left:112px;top:481.00px;font-size:18.75px;font-weight:700;color:#333;letter-spacing:-0.746px;transform-origin:0 18.00px;">Budowa drogi</span>
<div style="left:27px;top:518.6px;width:1866px;height:68.4px;background:#f5f5f5;border-top:1.200px solid #dcdcdc;"></div>
<div style="left:909px;top:519.6px;width:158.5px;height:34px;background:#ececec;"></div>
<div style="left:909px;top:553px;width:91.5px;height:33.5px;background:#ececec;"></div>
<div style="left:909px;top:582.8px;width:91.5px;height:3.4px;background:#0288d1;"></div>
<div style="left:110px;top:519.6px;width:1.2px;height:67.5px;background:#e4e4e4;"></div>
<div style="left:483.8px;top:519.6px;width:1.2px;height:67.5px;background:#e4e4e4;"></div>
<div style="left:600.8px;top:519.6px;width:1.2px;height:67.5px;background:#e4e4e4;"></div>
<div style="left:806.7px;top:519.6px;width:1.2px;height:67.5px;background:#e4e4e4;"></div>
<div style="left:908.6px;top:519.6px;width:1.2px;height:67.5px;background:#e4e4e4;"></div>
<div style="left:1067.3px;top:519.6px;width:1.2px;height:67.5px;background:#e4e4e4;"></div>
<div style="left:1255.5px;top:519.6px;width:1.2px;height:67.5px;background:#e4e4e4;"></div>
<div style="left:1490.7px;top:519.6px;width:1.2px;height:67.5px;background:#e4e4e4;"></div>
<div style="left:1662.6px;top:519.6px;width:1.2px;height:67.5px;background:#e4e4e4;"></div>
<div style="left:1869.3px;top:519.6px;width:1.2px;height:67.5px;background:#e4e4e4;"></div>
<div style="left:110px;top:552.5px;width:373.8px;height:1.2px;background:#e4e4e4;"></div>
<div style="left:600.8px;top:552.5px;width:205.9000000000001px;height:1.2px;background:#e4e4e4;"></div>
<div style="left:908.6px;top:552.5px;width:158.69999999999993px;height:1.2px;background:#e4e4e4;"></div>
<div style="left:1255.5px;top:552.5px;width:613.8px;height:1.2px;background:#e4e4e4;"></div>
<div style="left:288.2px;top:553px;width:1.2px;height:34px;background:#e4e4e4;"></div>
<div style="left:644.7px;top:553px;width:1.2px;height:34px;background:#e4e4e4;"></div>
<div style="left:703px;top:553px;width:1.2px;height:34px;background:#e4e4e4;"></div>
<div style="left:1000.4px;top:553px;width:1.2px;height:34px;background:#e4e4e4;"></div>
<div style="left:1425px;top:553px;width:1.2px;height:34px;background:#e4e4e4;"></div>
<div style="left:1595px;top:553px;width:1.2px;height:34px;background:#e4e4e4;"></div>
<div style="left:1769px;top:553px;width:1.2px;height:34px;background:#e4e4e4;"></div>
<div style="left:27px;top:586.4px;width:1866px;height:1.2px;background:#e2e2e2;"></div>
<span class="t" style="left:116px;top:525.00px;font-size:18.75px;font-weight:400;color:#1f1f1f;letter-spacing:-0.177px;transform-origin:0 18.00px;-webkit-text-stroke:0.55px #1f1f1f;">Etap</span>
<span class="t" style="left:116px;top:557.00px;font-size:18.75px;font-weight:400;color:#1f1f1f;letter-spacing:-0.065px;transform-origin:0 18.00px;-webkit-text-stroke:0.55px #1f1f1f;">Nazwa</span>
<span class="t" style="left:296px;top:557.00px;font-size:18.75px;font-weight:400;color:#1f1f1f;letter-spacing:-0.580px;transform-origin:0 18.00px;-webkit-text-stroke:0.55px #1f1f1f;">Opis</span>
<span class="t" style="left:493px;top:525.00px;font-size:18.75px;font-weight:400;color:#1f1f1f;letter-spacing:0.134px;transform-origin:0 18.00px;-webkit-text-stroke:0.55px #1f1f1f;">Sumaryczny</span>
<span class="t" style="left:608px;top:525.00px;font-size:18.75px;font-weight:400;color:#1f1f1f;letter-spacing:0.042px;transform-origin:0 18.00px;-webkit-text-stroke:0.55px #1f1f1f;">Usługa</span>
<span class="t" style="left:610px;top:557.00px;font-size:18.75px;font-weight:400;color:#1f1f1f;letter-spacing:-0.673px;transform-origin:0 18.00px;-webkit-text-stroke:0.55px #1f1f1f;transform:scale(1.1,1.035);">JM</span>
<span class="t" style="left:652px;top:557.00px;font-size:18.75px;font-weight:400;color:#1f1f1f;letter-spacing:0.420px;transform-origin:0 18.00px;-webkit-text-stroke:0.55px #1f1f1f;">Ilość</span>
<span class="t" style="left:710px;top:557.00px;font-size:18.75px;font-weight:400;color:#1f1f1f;letter-spacing:-0.983px;transform-origin:0 18.00px;-webkit-text-stroke:0.55px #1f1f1f;">Cena</span>
<span class="t" style="left:814px;top:525.00px;font-size:18.75px;font-weight:400;color:#1f1f1f;letter-spacing:0.012px;transform-origin:0 18.00px;-webkit-text-stroke:0.55px #1f1f1f;">Koszt</span>
<span class="t" style="left:916px;top:525.00px;font-size:18.75px;font-weight:400;color:#1f1f1f;letter-spacing:0.074px;transform-origin:0 18.00px;-webkit-text-stroke:0.55px #1f1f1f;">Narzut</span>
<span class="t" style="left:916px;top:557.00px;font-size:18.75px;font-weight:700;color:#1f1f1f;letter-spacing:-1.277px;transform-origin:0 18.00px;">Kwota</span>
<span class="t" style="left:1007px;top:557.00px;font-size:18.75px;font-weight:400;color:#1f1f1f;letter-spacing:-1.605px;transform-origin:0 18.00px;-webkit-text-stroke:0.55px #1f1f1f;">(%)</span>
<span class="t" style="left:1074px;top:525.00px;font-size:18.75px;font-weight:400;color:#1f1f1f;letter-spacing:0.118px;transform-origin:0 18.00px;-webkit-text-stroke:0.55px #1f1f1f;">Planowany przychód</span>
<span class="t" style="left:1264px;top:525.00px;font-size:18.75px;font-weight:400;color:#1f1f1f;letter-spacing:0.056px;transform-origin:0 18.00px;-webkit-text-stroke:0.55px #1f1f1f;">Zapotrzebowanie</span>
<span class="t" style="left:1263px;top:557.00px;font-size:18.75px;font-weight:400;color:#1f1f1f;letter-spacing:0.027px;transform-origin:0 18.00px;-webkit-text-stroke:0.55px #1f1f1f;">Kwota</span>
<span class="t" style="left:1432px;top:557.00px;font-size:18.75px;font-weight:400;color:#1f1f1f;letter-spacing:-1.105px;transform-origin:0 18.00px;-webkit-text-stroke:0.55px #1f1f1f;">(%)</span>
<span class="t" style="left:1498px;top:525.00px;font-size:18.75px;font-weight:400;color:#1f1f1f;letter-spacing:-0.023px;transform-origin:0 18.00px;-webkit-text-stroke:0.55px #1f1f1f;">Realizacja</span>
<span class="t" style="left:1498px;top:557.00px;font-size:18.75px;font-weight:400;color:#1f1f1f;letter-spacing:-0.105px;transform-origin:0 18.00px;-webkit-text-stroke:0.55px #1f1f1f;">Kwota</span>
<span class="t" style="left:1603px;top:557.00px;font-size:18.75px;font-weight:400;color:#1f1f1f;letter-spacing:-0.840px;transform-origin:0 18.00px;-webkit-text-stroke:0.55px #1f1f1f;">(%)</span>
<span class="t" style="left:1670px;top:525.00px;font-size:18.75px;font-weight:400;color:#1f1f1f;letter-spacing:0.120px;transform-origin:0 18.00px;-webkit-text-stroke:0.55px #1f1f1f;">Przychód</span>
<span class="t" style="left:1670px;top:557.00px;font-size:18.75px;font-weight:400;color:#1f1f1f;letter-spacing:-0.170px;transform-origin:0 18.00px;-webkit-text-stroke:0.55px #1f1f1f;">Kwota</span>
<span class="t" style="left:1776px;top:557.00px;font-size:18.75px;font-weight:400;color:#1f1f1f;letter-spacing:-0.945px;transform-origin:0 18.00px;-webkit-text-stroke:0.55px #1f1f1f;">(%)</span>
<svg style="left:38px;top:562px;" width="22.8" height="22.2" viewBox="0 0 22.8 22.2" fill="none"><rect x="1.80" y="1.80" width="19.20" height="18.60" rx="5" fill="#fff" stroke="#ababab" stroke-width="1.6"/></svg>
<svg style="left:1873px;top:543px;" width="14" height="19" viewBox="0 0 14 19" fill="none"><path d="M10.800 2L3 9.500l7.800 7.500" stroke="#bdbdbd" stroke-width="1.500"/></svg>
<div style="left:913px;top:508px;width:93px;height:20.3px;background:#fff;border:1.200px solid #dedede;border-radius:10.500px;"></div>
<svg style="left:951px;top:513px;" width="20" height="11" viewBox="0 0 20 11" fill="none"><path d="M2 2l8.300 7 8.300-7" stroke="#a6a6a6" stroke-width="2.300"/></svg>
<div style="left:27px;top:587.5px;width:1866px;height:35.75px;background:#f3f3f3;"></div>
<div style="left:27px;top:622.75px;width:1866px;height:1px;background:#eeeeee;"></div>
<div style="left:71.5px;top:587.5px;width:1.3px;height:35.75px;background:#fff;"></div>
<div style="left:110.5px;top:587.5px;width:178px;height:35.75px;background:#ffffe0;"></div>
<svg style="left:38.2px;top:594.1px;" width="22.7" height="21.7" viewBox="0 0 22.7 21.7" fill="none"><rect x="1.80" y="1.80" width="19.10" height="18.10" rx="5.5" fill="#fff" stroke="#cbcbcb" stroke-width="1.6"/></svg>
<div style="left:82px;top:600.0px;width:17.1px;height:17px;background:#00695c;border-radius:3.500px;"></div>
<div style="left:87.2px;top:595.4px;width:14.8px;height:14.6px;background:#558b2f;border:1.500px solid #fff;border-radius:3px;"></div>
<div style="left:128.2px;top:598.2px;width:14.9px;height:15.7px;background:linear-gradient(#fff,#ececec);border:1.300px solid #cdcdcd;border-radius:1px;"></div>
<div style="left:131.2px;top:604.9px;width:8.3px;height:2.3px;background:#1a3f8a;"></div>
<span class="t" style="left:162px;top:595.00px;font-size:18.75px;font-weight:400;color:#212121;letter-spacing:0.000px;transform-origin:0 18.00px;">1</span>
<span class="t" style="left:299px;top:595.00px;font-size:18.75px;font-weight:400;color:#212121;letter-spacing:-0.066px;transform-origin:0 18.00px;">Prace wstępne</span>
<svg style="left:534px;top:595.1px;" width="22" height="22" viewBox="0 0 22 22" fill="none"><circle cx="11" cy="11" r="10.800" fill="#ababab"/><path d="M7.200 7.200l7.600 7.600M14.800 7.200l-7.600 7.600" stroke="#fff" stroke-width="2.400" stroke-linecap="butt"/></svg>
<span class="t" style="left:719px;top:595.00px;font-size:18.75px;font-weight:400;color:#212121;letter-spacing:-0.342px;transform-origin:0 18.00px;">47 848,34</span>
<span class="t" style="left:821px;top:595.00px;font-size:18.75px;font-weight:400;color:#212121;letter-spacing:-0.270px;transform-origin:0 18.00px;">47 848,34</span>
<span class="t" style="left:923px;top:595.00px;font-size:18.75px;font-weight:400;color:#212121;letter-spacing:-0.136px;transform-origin:0 18.00px;">1 523,96</span>
<span class="t" style="left:1015px;top:595.00px;font-size:18.75px;font-weight:400;color:#212121;letter-spacing:-0.093px;transform-origin:0 18.00px;">3,185</span>
<span class="t" style="left:1168px;top:595.00px;font-size:18.75px;font-weight:400;color:#212121;letter-spacing:-0.282px;transform-origin:0 18.00px;">49 372,30</span>
<span class="t" style="left:1348px;top:595.00px;font-size:18.75px;font-weight:400;color:#212121;letter-spacing:-0.143px;transform-origin:0 18.00px;">2 350,40</span>
<div style="left:1426px;top:588px;width:65px;height:36px;background:#4db6ac;"></div>
<span class="t" style="left:1449px;top:595.00px;font-size:18.75px;font-weight:400;color:#212121;letter-spacing:-0.737px;transform-origin:0 18.00px;">4,91</span>
<span class="t" style="left:1533px;top:595.00px;font-size:18.75px;font-weight:400;color:#212121;letter-spacing:-0.168px;transform-origin:0 18.00px;">625,00</span>
<div style="left:1596px;top:588px;width:68px;height:36px;background:#4db6ac;"></div>
<span class="t" style="left:1622px;top:595.00px;font-size:18.75px;font-weight:400;color:#212121;letter-spacing:-0.280px;transform-origin:0 18.00px;">1,30</span>
<span class="t" style="left:1691px;top:595.00px;font-size:18.75px;font-weight:400;color:#212121;letter-spacing:-0.166px;transform-origin:0 18.00px;">3 861,75</span>
<div style="left:1770px;top:588px;width:102px;height:36px;background:#64b5f6;"></div>
<span class="t" style="left:1830px;top:595.00px;font-size:18.75px;font-weight:400;color:#212121;letter-spacing:-0.403px;transform-origin:0 18.00px;">7,82</span>
<div style="left:27px;top:623.25px;width:1866px;height:35.75px;background:#f3f3f3;"></div>
<div style="left:71.5px;top:623.25px;width:1.3px;height:35.75px;background:#fff;"></div>
<div style="left:110.5px;top:623.25px;width:178px;height:35.75px;background:#ffffe0;"></div>
<svg style="left:38.2px;top:629.85px;" width="22.7" height="21.7" viewBox="0 0 22.7 21.7" fill="none"><rect x="1.80" y="1.80" width="19.10" height="18.10" rx="5.5" fill="#fff" stroke="#cbcbcb" stroke-width="1.6"/></svg>
<div style="left:82px;top:635.75px;width:17.1px;height:17px;background:#ef6c00;border-radius:3.500px;"></div>
<div style="left:87.2px;top:631.15px;width:14.8px;height:14.6px;background:#558b2f;border:1.500px solid #fff;border-radius:3px;"></div>
<div style="left:162px;top:633.95px;width:14.9px;height:15.7px;background:linear-gradient(#fff,#ececec);border:1.300px solid #cdcdcd;border-radius:1px;"></div>
<div style="left:165px;top:640.65px;width:8.3px;height:2.3px;background:#1a3f8a;"></div>
<span class="t" style="left:196px;top:630.00px;font-size:18.75px;font-weight:400;color:#212121;letter-spacing:-0.500px;transform-origin:0 18.00px;">1.1</span>
<span class="t" style="left:299px;top:630.00px;font-size:18.75px;font-weight:400;color:#212121;letter-spacing:-0.081px;transform-origin:0 18.00px;">Przygotowanie terenu</span>
<svg style="left:534px;top:630.85px;" width="22" height="22" viewBox="0 0 22 22" fill="none"><circle cx="11" cy="11" r="10.800" fill="#ababab"/><path d="M7.200 7.200l7.600 7.600M14.800 7.200l-7.600 7.600" stroke="#fff" stroke-width="2.400" stroke-linecap="butt"/></svg>
<span class="t" style="left:614px;top:630.00px;font-size:18.75px;font-weight:400;color:#212121;letter-spacing:0.000px;transform-origin:0 18.00px;">tyd</span>
<span class="t" style="left:686px;top:630.00px;font-size:18.75px;font-weight:400;color:#212121;letter-spacing:0.000px;transform-origin:0 18.00px;">1</span>
<span class="t" style="left:729px;top:630.00px;font-size:18.75px;font-weight:400;color:#212121;letter-spacing:-0.150px;transform-origin:0 18.00px;">3 848,34</span>
<span class="t" style="left:830px;top:630.00px;font-size:18.75px;font-weight:400;color:#212121;letter-spacing:-0.067px;transform-origin:0 18.00px;">3 848,34</span>
<span class="t" style="left:938px;top:630.00px;font-size:18.75px;font-weight:400;color:#212121;letter-spacing:-0.010px;transform-origin:0 18.00px;">203,96</span>
<span class="t" style="left:1036px;top:630.00px;font-size:18.75px;font-weight:400;color:#212121;letter-spacing:-0.105px;transform-origin:0 18.00px;">5,3</span>
<span class="t" style="left:1179px;top:630.00px;font-size:18.75px;font-weight:400;color:#212121;letter-spacing:-0.339px;transform-origin:0 18.00px;">4 052,30</span>
<span class="t" style="left:1348px;top:630.00px;font-size:18.75px;font-weight:400;color:#212121;letter-spacing:-0.143px;transform-origin:0 18.00px;">2 350,40</span>
<div style="left:1426px;top:624px;width:65px;height:36px;background:#81c784;"></div>
<span class="t" style="left:1438px;top:630.00px;font-size:18.75px;font-weight:400;color:#212121;letter-spacing:-0.342px;transform-origin:0 18.00px;">61,07</span>
<span class="t" style="left:1533px;top:630.00px;font-size:18.75px;font-weight:400;color:#212121;letter-spacing:-0.168px;transform-origin:0 18.00px;">625,00</span>
<div style="left:1596px;top:624px;width:68px;height:36px;background:#ffb74d;"></div>
<span class="t" style="left:1612px;top:630.00px;font-size:18.75px;font-weight:400;color:#212121;letter-spacing:-0.315px;transform-origin:0 18.00px;">16,24</span>
<span class="t" style="left:1691px;top:630.00px;font-size:18.75px;font-weight:400;color:#212121;letter-spacing:-0.166px;transform-origin:0 18.00px;">3 861,75</span>
<div style="left:1770px;top:624px;width:102px;height:36px;background:#81c784;"></div>
<span class="t" style="left:1819px;top:630.00px;font-size:18.75px;font-weight:400;color:#212121;letter-spacing:-0.237px;transform-origin:0 18.00px;">95,29</span>
<div style="left:27px;top:693.75px;width:1866px;height:1.2px;background:#e9e9e9;"></div>
<div style="left:71.5px;top:659.0px;width:1.3px;height:35.75px;background:#ececec;"></div>
<div style="left:110.5px;top:659.0px;width:178px;height:35.75px;background:#ffffe0;"></div>
<svg style="left:38.2px;top:665.6px;" width="22.7" height="21.7" viewBox="0 0 22.7 21.7" fill="none"><rect x="1.80" y="1.80" width="19.10" height="18.10" rx="5.5" fill="#fff" stroke="#cbcbcb" stroke-width="1.6"/></svg>
<div style="left:82px;top:671.5px;width:17.1px;height:17px;background:#388e3c;border-radius:3.500px;"></div>
<div style="left:87.2px;top:666.9px;width:14.8px;height:14.6px;background:#558b2f;border:1.500px solid #fff;border-radius:3px;"></div>
<span class="t" style="left:230px;top:666.00px;font-size:18.75px;font-weight:400;color:#212121;letter-spacing:0.263px;transform-origin:0 18.00px;">1.1.M</span>
<span class="t" style="left:299px;top:666.00px;font-size:18.75px;font-weight:400;color:#212121;letter-spacing:-0.081px;transform-origin:0 18.00px;">Przygotowanie terenu</span>
<svg style="left:534px;top:666.6px;" width="22" height="22" viewBox="0 0 22 22" fill="none"><circle cx="11" cy="11" r="10.800" fill="#ababab"/><path d="M7.200 7.200l7.600 7.600M14.800 7.200l-7.600 7.600" stroke="#fff" stroke-width="2.400" stroke-linecap="butt"/></svg>
<span class="t" style="left:614px;top:666.00px;font-size:18.75px;font-weight:400;color:#212121;letter-spacing:0.000px;transform-origin:0 18.00px;">tyd</span>
<span class="t" style="left:686px;top:666.00px;font-size:18.75px;font-weight:400;color:#212121;letter-spacing:0.000px;transform-origin:0 18.00px;">1</span>
<span class="t" style="left:744px;top:666.00px;font-size:18.75px;font-weight:400;color:#212121;letter-spacing:-0.052px;transform-origin:0 18.00px;">245,56</span>
<span class="t" style="left:846px;top:666.00px;font-size:18.75px;font-weight:400;color:#212121;letter-spacing:0.064px;transform-origin:0 18.00px;">245,56</span>
<span class="t" style="left:949px;top:666.00px;font-size:18.75px;font-weight:400;color:#212121;letter-spacing:-0.290px;transform-origin:0 18.00px;">13,01</span>
<span class="t" style="left:1036px;top:666.00px;font-size:18.75px;font-weight:400;color:#212121;letter-spacing:-0.105px;transform-origin:0 18.00px;">5,3</span>
<span class="t" style="left:1193px;top:666.00px;font-size:18.75px;font-weight:400;color:#212121;letter-spacing:-0.210px;transform-origin:0 18.00px;">258,57</span>
<span class="t" style="left:1384px;top:666.00px;font-size:18.75px;font-weight:400;color:#212121;letter-spacing:-0.333px;transform-origin:0 18.00px;">0,00</span>
<span class="t" style="left:1448px;top:666.00px;font-size:18.75px;font-weight:400;color:#212121;letter-spacing:-0.403px;transform-origin:0 18.00px;">0,00</span>
<span class="t" style="left:1533px;top:666.00px;font-size:18.75px;font-weight:400;color:#212121;letter-spacing:-0.168px;transform-origin:0 18.00px;">225,00</span>
<div style="left:1596px;top:660px;width:68px;height:35px;background:#81c784;"></div>
<span class="t" style="left:1612px;top:666.00px;font-size:18.75px;font-weight:400;color:#212121;letter-spacing:-0.290px;transform-origin:0 18.00px;">91,62</span>
<span class="t" style="left:1707px;top:666.00px;font-size:18.75px;font-weight:400;color:#212121;letter-spacing:-0.326px;transform-origin:0 18.00px;">406,50</span>
<span class="t" style="left:1809px;top:666.00px;font-size:18.75px;font-weight:400;color:#212121;letter-spacing:-0.210px;transform-origin:0 18.00px;">157,20</span>
<div style="left:27px;top:729.5px;width:1866px;height:1.2px;background:#e9e9e9;"></div>
<div style="left:71.5px;top:694.75px;width:1.3px;height:35.75px;background:#ececec;"></div>
<div style="left:110.5px;top:694.75px;width:178px;height:35.75px;background:#ffffe0;"></div>
<svg style="left:38.2px;top:701.35px;" width="22.7" height="21.7" viewBox="0 0 22.7 21.7" fill="none"><rect x="1.80" y="1.80" width="19.10" height="18.10" rx="5.5" fill="#fff" stroke="#cbcbcb" stroke-width="1.6"/></svg>
<div style="left:82px;top:707.25px;width:17.1px;height:17px;background:#ef6c00;border-radius:3.500px;"></div>
<div style="left:87.2px;top:702.65px;width:14.8px;height:14.6px;background:#9e9d24;border:1.500px solid #fff;border-radius:3px;"></div>
<span class="t" style="left:230px;top:702.00px;font-size:18.75px;font-weight:400;color:#212121;letter-spacing:-0.263px;transform-origin:0 18.00px;">1.1.R</span>
<span class="t" style="left:299px;top:702.00px;font-size:18.75px;font-weight:400;color:#212121;letter-spacing:-0.081px;transform-origin:0 18.00px;">Przygotowanie terenu</span>
<svg style="left:534px;top:702.35px;" width="22" height="22" viewBox="0 0 22 22" fill="none"><circle cx="11" cy="11" r="10.800" fill="#ababab"/><path d="M7.200 7.200l7.600 7.600M14.800 7.200l-7.600 7.600" stroke="#fff" stroke-width="2.400" stroke-linecap="butt"/></svg>
<span class="t" style="left:614px;top:702.00px;font-size:18.75px;font-weight:400;color:#212121;letter-spacing:0.000px;transform-origin:0 18.00px;">tyd</span>
<span class="t" style="left:686px;top:702.00px;font-size:18.75px;font-weight:400;color:#212121;letter-spacing:0.000px;transform-origin:0 18.00px;">1</span>
<span class="t" style="left:729px;top:702.00px;font-size:18.75px;font-weight:400;color:#212121;letter-spacing:-0.136px;transform-origin:0 18.00px;">3 452,78</span>
<span class="t" style="left:830px;top:702.00px;font-size:18.75px;font-weight:400;color:#212121;letter-spacing:-0.053px;transform-origin:0 18.00px;">3 452,78</span>
<span class="t" style="left:938px;top:702.00px;font-size:18.75px;font-weight:400;color:#212121;letter-spacing:-0.010px;transform-origin:0 18.00px;">183,00</span>
<span class="t" style="left:1036px;top:702.00px;font-size:18.75px;font-weight:400;color:#212121;letter-spacing:-0.105px;transform-origin:0 18.00px;">5,3</span>
<span class="t" style="left:1178px;top:702.00px;font-size:18.75px;font-weight:400;color:#212121;letter-spacing:-0.196px;transform-origin:0 18.00px;">3 635,78</span>
<span class="t" style="left:1348px;top:702.00px;font-size:18.75px;font-weight:400;color:#212121;letter-spacing:-0.143px;transform-origin:0 18.00px;">2 350,40</span>
<div style="left:1426px;top:696px;width:65px;height:33px;background:#81c784;"></div>
<span class="t" style="left:1438px;top:702.00px;font-size:18.75px;font-weight:400;color:#212121;letter-spacing:-0.342px;transform-origin:0 18.00px;">68,07</span>
<span class="t" style="left:1534px;top:702.00px;font-size:18.75px;font-weight:400;color:#212121;letter-spacing:-0.368px;transform-origin:0 18.00px;">400,00</span>
<div style="left:1596px;top:696px;width:68px;height:33px;background:#ffb74d;"></div>
<span class="t" style="left:1612px;top:702.00px;font-size:18.75px;font-weight:400;color:#212121;letter-spacing:-0.198px;transform-origin:0 18.00px;">11,58</span>
<span class="t" style="left:1691px;top:702.00px;font-size:18.75px;font-weight:400;color:#212121;letter-spacing:-0.166px;transform-origin:0 18.00px;">3 455,25</span>
<div style="left:1770px;top:696px;width:102px;height:33px;background:#81c784;"></div>
<span class="t" style="left:1819px;top:702.00px;font-size:18.75px;font-weight:400;color:#212121;letter-spacing:-0.237px;transform-origin:0 18.00px;">95,03</span>
<div style="left:71.5px;top:730.5px;width:1.3px;height:10px;background:#ececec;"></div>
<div style="left:110.5px;top:730.5px;width:178px;height:10px;background:#ffffe0;"></div>
<div style="left:1255px;top:519px;width:640px;height:216px;background:transparent;border:2px solid #e8222c;border-radius:7px;box-shadow:inset 2px 2px 5px rgba(0,0,0,0.18);"></div>
</div></body></html>
